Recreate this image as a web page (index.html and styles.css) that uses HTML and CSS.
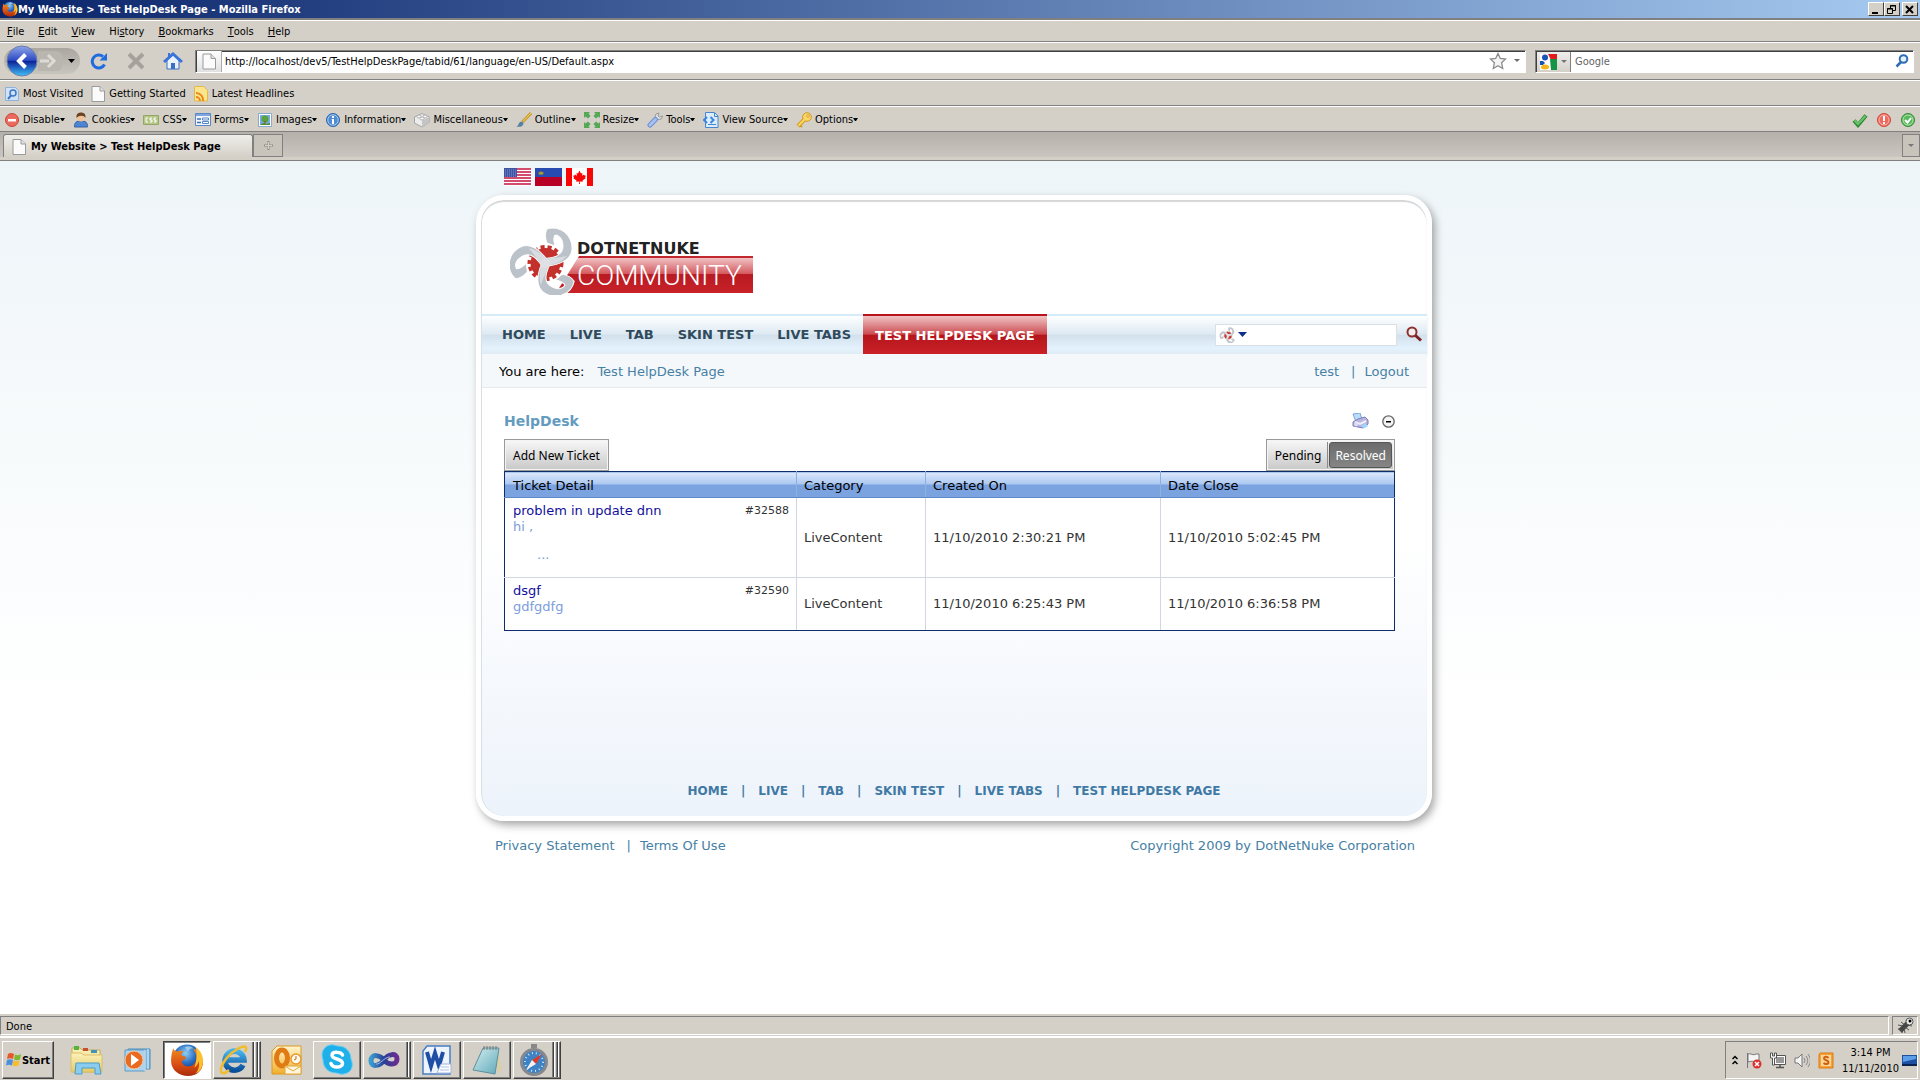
FILE: index.html
```html
<!DOCTYPE html>
<html lang="en">
<head>
    <meta charset="UTF-8">
    <meta name="viewport" content="width=device-width, initial-scale=1.0">
    <title>My Website &gt; Test HelpDesk Page</title>
    <link rel="stylesheet" href="styles.css">
</head>
<body>
    <!-- shared gradients and symbols -->
    <svg class="defs" width="0" height="0" aria-hidden="true">
        <defs>
            <linearGradient id="backBlue" x1="0" y1="0" x2="0" y2="1">
                <stop offset="0" stop-color="#8fa6e8"/><stop offset=".48" stop-color="#2c49c4"/>
                <stop offset=".5" stop-color="#0c1f96"/><stop offset="1" stop-color="#3fc0fa"/>
            </linearGradient>
            <linearGradient id="redBar" x1="0" y1="0" x2="0" y2="1">
                <stop offset="0" stop-color="#f3cfd1"/><stop offset=".49" stop-color="#d4585d"/>
                <stop offset=".5" stop-color="#b81b22"/><stop offset="1" stop-color="#c92128"/>
            </linearGradient>
            <linearGradient id="folder" x1="0" y1="0" x2="0" y2="1">
                <stop offset="0" stop-color="#fbf3bd"/><stop offset="1" stop-color="#e6c963"/>
            </linearGradient>
            <radialGradient id="globe" cx=".45" cy=".3" r=".7">
                <stop offset="0" stop-color="#8fd0f5"/><stop offset=".5" stop-color="#2a6cc0"/><stop offset="1" stop-color="#0a2a70"/>
            </radialGradient>
            <linearGradient id="fox" x1="0" y1="0" x2="0" y2="1">
                <stop offset="0" stop-color="#f08a1d"/><stop offset=".6" stop-color="#d94d12"/><stop offset="1" stop-color="#a82c0a"/>
            </linearGradient>
            <linearGradient id="ieBlue" x1="0" y1="0" x2="0" y2="1">
                <stop offset="0" stop-color="#46b4ec"/><stop offset="1" stop-color="#0a4f9a"/>
            </linearGradient>
            <linearGradient id="gold" x1="0" y1="0" x2="0" y2="1">
                <stop offset="0" stop-color="#fff6cf"/><stop offset="1" stop-color="#f2ad2b"/>
            </linearGradient>
            <linearGradient id="infinity" x1="0" y1="0" x2="1" y2="0">
                <stop offset="0" stop-color="#3a9bd0"/><stop offset=".5" stop-color="#2a3f95"/><stop offset="1" stop-color="#6a2c91"/>
            </linearGradient>
            <linearGradient id="pad" x1="0" y1="0" x2="1" y2="1">
                <stop offset="0" stop-color="#d5eef2"/><stop offset="1" stop-color="#5fa9b8"/>
            </linearGradient>
            <symbol id="i-page" viewBox="0 0 14 16">
                <path d="M1 .5h8l4.500 4.500v10.500H1z" fill="#fbfbfb" stroke="#9a9a9a"/><path d="M9 .5V5h4.500" fill="#e2e2e2" stroke="#9a9a9a"/>
            </symbol>
            <symbol id="i-firefox" viewBox="0 0 32 32">
                <circle cx="16" cy="15" r="13.500" fill="url(#globe)"/>
                <path d="M14 4c3-1.500 6-1 8 1-3 0-4 1-5 3z" fill="#b5e0f6" opacity=".7"/>
                <path d="M3 5c1 2 2 3 4 3 2-1 4-1 6 0-2 1-3 3-2 4l4 1c0 2-2 3-4 4 0 3 3 5 6 5 4 0 8-3 8-8 0-4-2-7-4-9 6 2 10 7 10 13 0 8-6 13-14 13S1 26 1 17c0-5 1-9 2-12z" fill="url(#fox)"/>
                <path d="M24 4c5 3 7 8 7 13 0 6-3 10-7 12 3-4 4-7 3-12-1 3-2 5-4 6 2-6 3-13 1-19z" fill="#fbc02d"/>
            </symbol>
            <symbol id="i-arm" viewBox="0 0 62 68" overflow="visible">
                <path d="M37 2C50-2 62 8 62 21c0 10-9 16-24 18l-5-4c0-3 3-4 6-4 9-1 14-5 14-12 0-6-3-11-8-11-2 3-1 7 0 11l-8-3c-2-5-2-10 0-14z" fill="#bcc2c9" stroke="#fff"/>
                <path d="M57 29c-5 5-11 8-19 10l-5-4c0-3 3-4 6-4 7 0 13-1 18-2z" fill="#d9dce0"/>
            </symbol>
            <symbol id="i-mark" viewBox="0 0 62 68" overflow="visible">
                <circle cx="35.500" cy="36" r="15" fill="#c4302b"/>
                <circle cx="35.500" cy="36" r="16" fill="none" stroke="#c4302b" stroke-width="4" stroke-dasharray="4 3"/>
                <use href="#i-arm" width="62" height="68"/>
                <use href="#i-arm" width="62" height="68" transform="rotate(120 35.500 36)"/>
                <use href="#i-arm" width="62" height="68" transform="rotate(240 35.500 36)"/>
                <circle cx="35.500" cy="36" r="5" fill="#dfe1e4"/>
            </symbol>
        </defs>
    </svg>

    <div class="window">
        <header class="chrome">
            <div class="titlebar">
                <svg width="16" height="16"><use href="#i-firefox"/></svg>
                <span class="titlebar-text">My Website &gt; Test HelpDesk Page - Mozilla Firefox</span>
                <div class="window-btns">
                    <button aria-label="Minimize"><svg width="10" height="9"><path d="M1 7h6v2H1z"/></svg></button>
                    <button aria-label="Restore"><svg width="10" height="9" fill="none" stroke="#000"><path d="M3.500 3V.5h5v5H6M3 1h6M.5 3.500h5v5h-5zM0 4h6"/></svg></button>
                    <button class="close" aria-label="Close"><svg width="10" height="9"><path d="M1 1l7 7M8 1L1 8" stroke="#000" stroke-width="2"/></svg></button>
                </div>
            </div>

            <nav class="menubar">
                <button><u>F</u>ile</button>
                <button><u>E</u>dit</button>
                <button><u>V</u>iew</button>
                <button>Hi<u>s</u>tory</button>
                <button><u>B</u>ookmarks</button>
                <button><u>T</u>ools</button>
                <button><u>H</u>elp</button>
            </nav>

            <div class="navbar">
                <div class="history-btns">
                    <button class="back" aria-label="Back"><svg width="32" height="32" viewBox="0 0 32 32"><circle cx="16" cy="16" r="15" fill="url(#backBlue)" stroke="#6d7da8"/><path d="M19.500 9.500L13 16l6.500 6.500" fill="none" stroke="#fff" stroke-width="4"/></svg></button>
                    <button aria-label="Forward"><svg width="26" height="22" viewBox="0 0 26 22"><path d="M0 1h18q7 0 7 10t-7 10H0z" fill="#b9b6b0"/><path d="M2 11h9M10 5l6 6-6 6" fill="none" stroke="#dedbd6" stroke-width="3"/></svg></button>
                    <button aria-label="Recent pages"><svg width="14" height="5"><path d="M4 0h7L7.500 4z"/></svg></button>
                </div>
                <button class="tool" aria-label="Reload"><svg width="18" height="18" viewBox="0 0 18 18"><path d="M14.500 12.500A6.500 6.500 0 1 1 13 4.500" fill="none" stroke="#1f6be0" stroke-width="3"/><path d="M17 1v7.500H9.500z" fill="#1f6be0"/></svg></button>
                <button class="tool" aria-label="Stop"><svg width="18" height="18" viewBox="0 0 18 18"><path d="M2 2l14 14M16 2L2 16" stroke="#a5a29c" stroke-width="4"/></svg></button>
                <button class="tool" aria-label="Home"><svg width="20" height="18" viewBox="0 0 20 18"><path d="M4 8v9h12V8l-6-5z" fill="#e9f2fd" stroke="#3a70c4"/><path d="M1 10l9-8 9 8" fill="none" stroke="#3a74d8" stroke-width="3"/><path d="M5 1h2v4H5z" fill="#3a74d8"/><path d="M8 11h4v6H8z" fill="#3a70c4"/></svg></button>
                <div class="field url-field">
                    <span class="field-icon"><svg width="14" height="17"><use href="#i-page"/></svg></span>
                    <input type="text" aria-label="Address" value="http://localhost/dev5/TestHelpDeskPage/tabid/61/language/en-US/Default.aspx">
                    <button aria-label="Bookmark this page"><svg width="18" height="18" viewBox="0 0 18 18"><path d="M9 1.500l2.300 5 5.200.6-3.900 3.700 1.100 5.700L9 13.700l-4.700 2.800 1.100-5.700L1.500 7.100l5.200-.6z" fill="#f4f4f4" stroke="#8b8b8b" stroke-width="1.300"/></svg></button>
                    <button aria-label="Show history"><svg width="8" height="4"><path d="M1 0h6L4 3z" fill="#6b6b6b"/></svg></button>
                </div>
                <div class="field search-field">
                    <button class="engine" aria-label="Search engine">
                        <svg width="17" height="16" viewBox="0 0 17 16"><path fill="#fff" d="M0 0h17v16H0z"/><path d="M8 0h9v6h-6z" fill="#e21c1c"/><path d="M10 5h7v11h-6z" fill="#159447"/><circle cx="5" cy="3.500" r="3" fill="#1a53b8"/><path d="M0 7h3l2 2-2 2H0z" fill="#1a53b8"/><ellipse cx="5" cy="13" rx="4" ry="2.500" fill="#f3b71b"/></svg>
                        <svg width="6" height="4"><path d="M0 0h6L3 3z" fill="#777"/></svg>
                    </button>
                    <input type="text" aria-label="Search" placeholder="Google">
                    <button aria-label="Search"><svg width="14" height="14" viewBox="0 0 14 14"><circle cx="8.500" cy="5" r="3.800" fill="#e8f1fa" stroke="#2e6db4" stroke-width="2"/><path d="M6 8l-4.500 4.500" stroke="#2e6db4" stroke-width="2.500"/></svg></button>
                </div>
            </div>

            <div class="bookmarks">
                <a href="#"><svg width="14" height="16" viewBox="0 0 14 16"><path d="M.5 1.500h10l3 3v10H.5z" fill="#cfe2f7" stroke="#8fb2dc"/><circle cx="8" cy="7" r="3" fill="none" stroke="#3d78c4" stroke-width="1.500"/><path d="M6 9.500L3 13" stroke="#3d78c4" stroke-width="2"/></svg>Most Visited</a>
                <a href="#"><svg width="14" height="16"><use href="#i-page"/></svg>Getting Started</a>
                <a href="#"><svg width="14" height="16" viewBox="0 0 14 16"><path d="M.5 .5h9l4 4v10.500H.5z" fill="#fbe58d" stroke="#e3b94a"/><path d="M2 7a7 7 0 0 1 7 8M2 11a4 4 0 0 1 4 4" fill="none" stroke="#e88a1c" stroke-width="2"/></svg>Latest Headlines</a>
            </div>

            <div class="devbar">
                <button><svg width="16" height="16" viewBox="0 0 16 16"><circle cx="8" cy="8" r="6.500" fill="#ea6a5e" stroke="#c9473c"/><path d="M4 7h8v2.500H4z" fill="#fff"/></svg>Disable<i></i></button>
                <button><svg width="16" height="16" viewBox="0 0 16 16"><path d="M1.500 15c0-5 2-6 6.500-6s6.500 1 6.500 6z" fill="#4e84d4" stroke="#3562a5"/><circle cx="8" cy="5.500" r="4" fill="#f1c39a"/><path d="M3.500 6C3 1 6 .5 8 .5S13 1 12.500 6C11 3 6 3 3.500 6z" fill="#6a4423"/></svg>Cookies<i></i></button>
                <button><svg width="16" height="16" viewBox="0 0 16 16"><path d="M.5 3.500h15v9H.5z" fill="#b6c687" stroke="#93a765"/><path d="M5 6H3v4h2M9 6H7v2h2v2H7M13 6h-2v2h2v2h-2" fill="none" stroke="#fff"/></svg>CSS<i></i></button>
                <button><svg width="16" height="16" viewBox="0 0 16 16"><path d="M.5 1.500h15v12H.5z" fill="#f2f7fd" stroke="#5a87c5"/><path d="M1 2h14v2H1z" fill="#7ea6dc"/><path d="M2 7h4M2 10.500h4" stroke="#3e6fb5" stroke-width="1.500"/><path d="M7.500 6h6v2h-6zM7.500 9.500h6v2h-6z" fill="#fff" stroke="#5a87c5"/></svg>Forms<i></i></button>
                <button><svg width="16" height="16" viewBox="0 0 16 16"><path d="M1.500 1.500h13v13h-13z" fill="#fff" stroke="#8aa9cf"/><path d="M3 3h10v10H3z" fill="#79a9e0"/><path d="M3 13l3-2 3 1 4-1v2z" fill="#4a8f32"/><circle cx="8" cy="7" r="3.500" fill="#59a33c"/><path d="M7.500 9h1v3h-1z" fill="#80571f"/></svg>Images<i></i></button>
                <button><svg width="16" height="16" viewBox="0 0 16 16"><circle cx="8" cy="8" r="6.500" fill="#4f8cd2" stroke="#2c65ad"/><circle cx="8" cy="8" r="5.200" fill="none" stroke="#a8caee"/><path d="M7 4h2v2H7zM6.500 7H9v5H7V8z" fill="#fff"/></svg>Information<i></i></button>
                <button><svg width="16" height="16" viewBox="0 0 16 16"><path d="M.5 5L8 1.500 15.500 5v5L8 15 .5 11z" fill="#ececec" stroke="#a5a5a5"/><path d="M8 8.500l7.500-3.500v5L8 15z" fill="#c4c4c4"/><g fill="#fafafa" stroke="#b0b0b0"><ellipse cx="5" cy="4.500" rx="2" ry="1.500"/><ellipse cx="11" cy="4.500" rx="2" ry="1.500"/><ellipse cx="8" cy="6.500" rx="2" ry="1.500"/></g></svg>Miscellaneous<i></i></button>
                <button><svg width="16" height="16" viewBox="0 0 16 16"><path d="M15 1L6.500 10" stroke="#c99b2c" stroke-width="3"/><path d="M15 1L7 9.500" stroke="#f2d36b"/><path d="M0 14.500c3 0 2-5 6-5l1.500 1.500c0 3.500-4 4.500-7.500 3.500z" fill="#5780a5"/></svg>Outline<i></i></button>
                <button><svg width="16" height="16" viewBox="0 0 16 16" fill="#55a854"><path d="M0 0h6L4.500 1.500 6.500 4 4 6.500 1.500 4.500 0 6zM16 0v6l-1.500-1.500L12 6.500 9.500 4l2-2.500L10 0zM0 16v-6l1.500 1.500L4 9.500 6.500 12l-2 2.500L6 16zM16 16h-6l1.500-1.500-2-2.500L12 9.500l2.500 2L16 10z"/></svg>Resize<i></i></button>
                <button><svg width="16" height="16" viewBox="0 0 16 16"><path d="M12 1L9 2 8 5l1 2 2 .5L14.500 7 15.500 4l-3 1-1.500-1z" fill="#e3e3e3" stroke="#999"/><path d="M8.500 7.500L3 13" stroke="#6b8fd6" stroke-width="5" stroke-linecap="round"/><path d="M8.500 7.500L3 13" stroke="#a9c1f0" stroke-width="3" stroke-linecap="round"/></svg>Tools<i></i></button>
                <button><svg width="16" height="16" viewBox="0 0 16 16"><path d="M2.500 .5h9l3.500 3.500v11.500H2.500z" fill="#dcecfb" stroke="#4686cf"/><path d="M5 12.500h8M11.500 1v3.500H15" stroke="#4686cf" fill="none"/><path d="M4 5L1 8l3 3M7.500 5l3 3-3 3" fill="none" stroke="#3b86e0" stroke-width="2"/></svg>View Source<i></i></button>
                <button><svg width="16" height="16" viewBox="0 0 16 16"><path d="M9 7L2 14" stroke="#d39a22" stroke-width="4"/><path d="M4 13l2 2" stroke="#d39a22" stroke-width="2"/><circle cx="11" cy="5" r="4.300" fill="#fbd765" stroke="#d39a22"/><path d="M8.500 7.500L2.500 13.500" stroke="#fbd765" stroke-width="2"/><circle cx="12" cy="4" r="1.300" fill="#fff" stroke="#d39a22"/></svg>Options<i></i></button>
                <div class="checks">
                    <svg width="16" height="16" viewBox="0 0 16 16"><path d="M2 8.500l4 4.500L14 3.500" fill="none" stroke="#2f8a33" stroke-width="4"/><path d="M2.500 8.500L6 12l7.500-8" fill="none" stroke="#6cc36c" stroke-width="2"/></svg>
                    <svg width="16" height="16" viewBox="0 0 16 16"><circle cx="8" cy="8" r="6.500" fill="#ef6a5c" stroke="#cf4638"/><circle cx="8" cy="8" r="5" fill="none" stroke="#f9bab2"/><path d="M7 4h2v5H7zM7 10h2v2H7z" fill="#fff"/></svg>
                    <svg width="16" height="16" viewBox="0 0 16 16"><circle cx="8" cy="8" r="6.500" fill="#5cb85c" stroke="#2f8a33"/><circle cx="8" cy="8" r="5" fill="none" stroke="#b9e3b4"/><path d="M5 8l2.500 2.500L11 6" fill="none" stroke="#fff" stroke-width="2"/></svg>
                </div>
            </div>

            <div class="tabs">
                <button class="tab active"><svg width="14" height="16"><use href="#i-page"/></svg>My Website &gt; Test HelpDesk Page</button>
                <button class="tab new-tab" aria-label="New tab"><svg width="9" height="9"><path d="M3.500 0h2v3.500H9v2H5.500V9h-2V5.500H0v-2h3.500z" fill="#8d8a85"/><path d="M4.500 1v7M1 4.500h7" stroke="#d4d0c8"/></svg></button>
                <button class="tab all-tabs" aria-label="List all tabs"><svg width="6" height="4"><path d="M0 0h6L3 3z" fill="#777"/></svg></button>
            </div>
        </header>

        <main class="page">
            <div class="site">
                <div class="flags">
                    <a href="#" aria-label="English (United States)"><svg width="27" height="18"><path fill="#fff" d="M0 0h27v18H0z"/><path d="M0 1h27M0 4h27M0 7h27M0 10h27M0 13h27M0 16h27" stroke="#c4123f" stroke-width="1.500"/><path fill="#3c55a5" d="M0 0h13v9H0z"/><path d="M1 2h12M1 4h12M1 6h12M1 8h12" stroke="#8191c9" stroke-dasharray="1 1"/></svg></a>
                    <a href="#" aria-label="Deutsch (Liechtenstein)"><svg width="27" height="18"><path fill="#274bb0" d="M0 0h27v9H0z"/><path fill="#b80027" d="M0 9h27v9H0z"/><path d="M4 6.500h4l.5-2.500-1.500.5-1-1.500-1 1.500L3.500 4z" fill="#b5a23a" stroke="#7f773c" stroke-width=".5"/></svg></a>
                    <a href="#" aria-label="English (Canada)"><svg width="27" height="18"><path fill="#fff" d="M0 0h27v18H0z"/><path fill="#fa0505" d="M0 0h6v18H0zM21 0h6v18h-6zM13.500 2.500l1.500 3 1.500-.7-.5 3 2-1.300.5 1 1.500.2-1 1.800.7.700-3.200 2.300.3 1.200-3-.3.200 2.600h-1l.2-2.600-3 .3.300-1.200-3.200-2.300.7-.7-1-1.800 1.500-.2.500-1 2 1.300-.5-3 1.500.7z"/></svg></a>
                </div>

                <div class="card">
                    <a class="logo" href="#" aria-label="DotNetNuke Community">
                        <svg width="244" height="68" viewBox="0 0 244 68">
                            <path d="M69 29h174v37H46z" fill="url(#redBar)"/>
                            <path d="M69 29h174v2H68z" fill="#c3272d"/>
                            <use href="#i-mark" width="62" height="68"/>
                            <text class="logo-name" x="67" y="27">DOTNETNUKE</text>
                            <text class="logo-sub" x="67" y="58">COMMUNITY</text>
                        </svg>
                    </a>

                    <nav class="mainnav">
                        <a href="#">HOME</a>
                        <a href="#">LIVE</a>
                        <a href="#">TAB</a>
                        <a href="#">SKIN TEST</a>
                        <a href="#">LIVE TABS</a>
                        <a href="#" class="active">TEST HELPDESK PAGE</a>
                        <form class="site-search">
                            <div class="site-search-box">
                                <svg width="16" height="16" viewBox="0 0 62 68"><use href="#i-mark" width="62" height="68"/></svg>
                                <svg width="9" height="6"><path d="M0 0h9L4.500 5z" fill="#0b2f8a"/></svg>
                                <input type="text" aria-label="Search site">
                            </div>
                            <button type="button" aria-label="Go"><svg width="18" height="18" viewBox="0 0 18 18"><circle cx="7" cy="6" r="4.500" fill="#f3eeee" stroke="#8e3030" stroke-width="2"/><path d="M10.500 9.500l5.500 5" stroke="#7c1f1f" stroke-width="3"/></svg></button>
                        </form>
                    </nav>

                    <div class="crumbs">
                        <span>You are here:</span>
                        <a href="#">Test HelpDesk Page</a>
                        <div class="user">
                            <a href="#">test</a><span class="bar">|</span><a href="#">Logout</a>
                        </div>
                    </div>

                    <section class="module">
                        <div class="module-head">
                            <h1>HelpDesk</h1>
                            <button aria-label="Print"><svg width="17" height="16" viewBox="0 0 17 16"><path d="M1 1l7-1 2 6-6 3z" fill="#b9dcf8" stroke="#7aa6dc"/><path d="M1 9l5-3 7-2 3 3v4l-5 4-10-2z" fill="#b7b4de" stroke="#7c7bb8"/><path d="M3 9l5 2 6-3" stroke="#f0eefb" stroke-width="2" fill="none"/><path d="M9 13l4-3 3 3-4 2.500z" fill="#9ed4fa"/><circle cx="4" cy="11.500" r="2" fill="#dcdaf2"/></svg></button>
                            <button aria-label="Minimize module"><svg width="13" height="13"><circle cx="6.500" cy="6.500" r="5.700" fill="#f4f4f4" stroke="#666" stroke-width="1.300"/><path d="M4 6h5v1.500H4z"/></svg></button>
                        </div>
                        <div class="actions">
                            <button class="btn">Add New Ticket</button>
                            <div class="toggle">
                                <button>Pending</button>
                                <button class="on">Resolved</button>
                            </div>
                        </div>
                        <table class="tickets">
                            <thead>
                                <tr>
                                    <th class="col-detail">Ticket Detail</th>
                                    <th class="col-category">Category</th>
                                    <th class="col-date">Created On</th>
                                    <th>Date Close</th>
                                </tr>
                            </thead>
                            <tbody>
                                <tr class="tall">
                                    <td class="detail">
                                        <div class="ticket-top"><a href="#">problem in update dnn</a><span>#32588</span></div>
                                        <p>hi ,</p>
                                        <p class="more">...</p>
                                    </td>
                                    <td>LiveContent</td>
                                    <td>11/10/2010 2:30:21 PM</td>
                                    <td>11/10/2010 5:02:45 PM</td>
                                </tr>
                                <tr>
                                    <td class="detail">
                                        <div class="ticket-top"><a href="#">dsgf</a><span>#32590</span></div>
                                        <p>gdfgdfg</p>
                                    </td>
                                    <td>LiveContent</td>
                                    <td>11/10/2010 6:25:43 PM</td>
                                    <td>11/10/2010 6:36:58 PM</td>
                                </tr>
                            </tbody>
                        </table>
                    </section>

                    <nav class="footnav">
                        <a href="#">HOME</a><span>|</span><a href="#">LIVE</a><span>|</span><a href="#">TAB</a><span>|</span><a href="#">SKIN TEST</a><span>|</span><a href="#">LIVE TABS</a><span>|</span><a href="#">TEST HELPDESK PAGE</a>
                    </nav>
                </div>

                <footer class="legal">
                    <a href="#">Privacy Statement</a><span class="bar">|</span><a href="#">Terms Of Use</a>
                    <span class="copyright">Copyright 2009 by DotNetNuke Corporation</span>
                </footer>
            </div>
        </main>

        <div class="statusbar">
            <div class="status-text">Done</div>
            <div class="status-icon"><svg width="17" height="17" viewBox="0 0 17 17"><path d="M3 14l8-8" stroke="#444" stroke-width="5"/><path d="M1 8l5 1M4 5l4 3M8 16l-1-5M12 13l-4-3M1 12l3 0M5 16v-3M9 3l2 3M15 9l-4-1" stroke="#555"/><circle cx="12.500" cy="4.500" r="3.500" fill="#eee" stroke="#555"/><circle cx="13" cy="4" r="1.500"/></svg></div>
        </div>
    </div>

    <footer class="taskbar">
        <button class="start"><svg width="16" height="16" viewBox="0 0 16 16"><path d="M2 2c2-1.500 4-1 6 0L7 7C5 6 3 6 1 7z" fill="#e8572a"/><path d="M9 2.500c2 1 4 1 6-.5l-1 5.500c-2 1-4 1-6 0z" fill="#7cb82f"/><path d="M1 8c2-1 4-1 6 0l-1 5.500c-2-1-4-1-6 0z" fill="#4a8fe0"/><path d="M7.500 8.500c2 1 4 1 6 0l-1 5c-2 1-4 1-6 0z" fill="#f7bd27"/></svg>Start</button>
        <button class="task plain" aria-label="Windows Explorer"><svg width="34" height="32" viewBox="0 0 34 32"><path d="M2 4h8l2 2h18v22H2z" fill="url(#folder)" stroke="#c9ab50"/><path d="M4 2h5v4H4z" fill="#58b33c"/><path d="M13 4h5v3h-5z" fill="#c9502c"/><path d="M21 6h6v3h-6z" fill="#4193b8"/><path d="M1 9h10l3 2h18v17H1z" fill="url(#folder)" stroke="#dbc06a"/><path d="M5 30l1-11h23l2 11h-6v-6H12v6z" fill="#8accee" stroke="#4c9cc8"/></svg></button>
        <button class="task plain" aria-label="Media Player"><svg width="32" height="32" viewBox="0 0 32 32"><path d="M7 5h22v20H7z" fill="#7fb7dc" stroke="#4b8dba"/><path d="M4 6h20v21H4z" fill="#a9d3ee" stroke="#5d9cc6"/><path d="M24 6v21M27 5v20" stroke="#e4f3fc"/><circle cx="13" cy="16" r="9" fill="#ea6a1f" stroke="#f7c7a4"/><path d="M10 10v12l8-6z" fill="#fff"/></svg></button>
        <button class="task pressed" aria-label="Firefox"><svg width="34" height="34"><use href="#i-firefox"/></svg></button>
        <button class="task stack-3" aria-label="Internet Explorer"><svg width="32" height="32" viewBox="0 0 32 32"><path d="M25 21a9.500 9.500 0 1 1 1-5H9" fill="none" stroke="url(#ieBlue)" stroke-width="5.500"/><path d="M27 8c4-8-3-6-9-2C8 12 0 25 4 29c2 1 5-1 7-3" fill="none" stroke="#f2bd2c" stroke-width="2.500"/></svg></button>
        <button class="task plain" aria-label="Outlook"><svg width="32" height="32" viewBox="0 0 32 32"><path d="M6 2h24v28H1V7z" fill="url(#gold)" stroke="#dc9a22"/><ellipse cx="11" cy="14" rx="5.500" ry="8" fill="none" stroke="#e07a12" stroke-width="5"/><path d="M14 22h16v8H14z" fill="#fff7df" stroke="#e2a638"/><path d="M14 22l8 5 8-5" fill="none" stroke="#e2a638"/><circle cx="25" cy="15" r="5" fill="#fffaf0" stroke="#e59a2d" stroke-width="1.500"/><path d="M25 12v3l-2 1" stroke="#c46c10" fill="none"/></svg></button>
        <button class="task" aria-label="Skype"><svg width="32" height="32" viewBox="0 0 32 32"><path d="M9 1c4-1 6 1 8 1 8 0 13 6 13 13 3 6 1 14-7 15-4 1-5-1-8-1C7 29 2 23 2 16-1 9 3 2 9 1z" fill="#1fb0ea" stroke="#6fcff5"/><path d="M21.500 11c-1-3-10-4-10.500 0-.5 5 10.500 3 10.500 8.500 0 4.500-10 5-11.500 0" fill="none" stroke="#fff" stroke-width="3.500" stroke-linecap="round"/></svg></button>
        <button class="task stack-2" aria-label="Visual Studio"><svg width="32" height="32" viewBox="0 0 32 32"><path d="M16 16c-4-5-13-7-13 1 0 7 9 5 13-1s13-8 13-1-9 6-13 1z" fill="none" stroke="url(#infinity)" stroke-width="5"/><path d="M8 20c4 1 8-7 14-7" fill="none" stroke="#9db7e6"/></svg></button>
        <button class="task" aria-label="Word"><svg width="32" height="32" viewBox="0 0 32 32"><path d="M6 2h23v28H2V7z" fill="#eef4fc" stroke="#4a7cc4" stroke-width="1.500"/><path d="M6 8l4 14 4-13 4 13 4-14" fill="none" stroke="#1f4fa5" stroke-width="4"/><path d="M20 20h10v9H16z" fill="#fff" stroke="#9fb6d8"/><path d="M20 23h8M19 26h9" stroke="#a9c1e4"/></svg></button>
        <button class="task" aria-label="Notepad"><svg width="32" height="32" viewBox="0 0 32 32"><path d="M27 5l4 20-5 5z" fill="#d9cfa8"/><path d="M12 4h16l-4 26-22-4z" fill="url(#pad)" stroke="#5d8f9b"/><path d="M13 2v4M16 2v4M19 2v4M22 2v4M25 2v4" stroke="#777"/></svg></button>
        <button class="task stack-3" aria-label="Safari"><svg width="32" height="34" viewBox="0 0 32 34"><path d="M13 1h6v4h-6z" fill="#888"/><circle cx="16" cy="19" r="12.500" fill="#3f82c4" stroke="#85888c" stroke-width="3"/><circle cx="16" cy="19" r="9" fill="none" stroke="#cfe4f5" stroke-width="2" stroke-dasharray="1 3"/><path d="M24 11l-6 10-4-4z" fill="#e03a26"/><path d="M8 27l6-10 4 4z" fill="#f2f2f2"/></svg></button>
        <div class="tray">
            <svg width="6" height="10" fill="none" stroke="#000" stroke-width="1.500"><path d="M.5 4L3 1.500 5.500 4M.5 9L3 6.500 5.500 9"/></svg>
            <svg width="16" height="17" viewBox="0 0 16 17"><path d="M1.500 1v15M2 2c3-1 5 2 8 0h3v8c-4 1-6-2-11 0z" fill="#f5f5f5" stroke="#777"/><circle cx="11" cy="12" r="4.500" fill="#dc2f2f"/><path d="M9 10l4 4M13 10l-4 4" stroke="#fff" stroke-width="1.500"/></svg>
            <svg width="16" height="17" viewBox="0 0 16 17"><path d="M4.500 3.500h11v9h-11z" fill="#fff" stroke="#555"/><path d="M6 5h8v6H6z" fill="#999"/><path d="M6 15.500h8M10 13v2" stroke="#555" stroke-width="1.500"/><path d="M.5 1v5h2v7h2V6h2V1h-2v3h-2V1z" fill="#fff" stroke="#555"/></svg>
            <svg width="16" height="17" viewBox="0 0 16 17"><path d="M1 6h3l4-4v13l-4-4H1z" fill="#f5f5f5" stroke="#777"/><path d="M10 6q2 2.500 0 5M12 4q3.500 4.500 0 9M14 2q5 6.500 0 13" fill="none" stroke="#888"/></svg>
            <svg width="16" height="17" viewBox="0 0 16 17"><path d="M2 1h13v15H1V3z" fill="#f6a234" stroke="#d97b12"/><path d="M3 3h10v11H3z" fill="#fbd69b"/><path d="M10.500 6C9 4 6 4.500 6 6.500c0 2 4.500 1.500 4.500 3.700C10.500 12.500 7 12.500 5.500 11" fill="none" stroke="#cf5f0b" stroke-width="2"/></svg>
            <div class="clock"><span>3:14 PM</span><span>11/11/2010</span></div>
            <svg width="15" height="13"><path fill="#1d4fa3" d="M0 1h15v10H0z"/><path fill="#5d9ee6" d="M1 2h13v3L1 8z"/><path fill="#0c2450" d="M0 10h15v2H0z"/></svg>
        </div>
    </footer>
</body>
</html>
```

FILE: styles.css
```css
* {
    box-sizing: border-box;
}

html, body {
    height: 100%;
    margin: 0;
}

body {
    display: flex;
    flex-direction: column;
    overflow: hidden;
    background-color: #d4d0c8;
    font-family: "DejaVu Sans Condensed", "DejaVu Sans", Tahoma, sans-serif;
    font-size: 11px;
    color: #000;
}

button {
    display: flex;
    align-items: center;
    padding: 0;
    border: none;
    background: none;
    font: inherit;
    color: inherit;
    white-space: nowrap;
}

input {
    border: none;
    outline: none;
    background: none;
    font: inherit;
    min-width: 0;
    padding: 0;
}

a {
    color: inherit;
    text-decoration: none;
}

svg {
    flex: none;
    display: block;
}

.defs {
    position: absolute;
}

.window {
    flex: 1;
    display: flex;
    flex-direction: column;
    min-height: 0;
}

/* browser chrome */
.titlebar {
    display: flex;
    align-items: center;
    height: 18px;
    padding: 0 2px;
    background: linear-gradient(to right, #0a246a, #a6caf0);
    color: #fff;
    font-weight: bold;
}

.titlebar-text {
    flex: 1;
}

.window-btns {
    display: flex;
}

.window-btns button {
    width: 16px;
    height: 14px;
    justify-content: center;
    background-color: #d4d0c8;
    border: 1px solid;
    border-color: #fff #404040 #404040 #fff;
}

.window-btns .close {
    margin-left: 2px;
}

.menubar, .navbar, .bookmarks, .devbar {
    display: flex;
    align-items: center;
    border-top: 1px solid #fff;
    border-bottom: 1px solid #808080;
}

.menubar {
    height: 24px;
    padding: 2px 7px 0;
    gap: 14px;
    border-top: 2px solid #808080;
    box-shadow: inset 0 1px #fff;
}

.navbar {
    height: 38px;
    padding: 0 6px 0 4px;
}

.history-btns {
    display: flex;
    align-items: center;
    height: 26px;
    width: 76px;
    border-radius: 13px;
    background: linear-gradient(#aaa7a0, #c8c5bf);
}

.history-btns .back {
    margin-left: 2px;
}

.tool {
    width: 36px;
    height: 30px;
    margin-left: 1px;
    justify-content: center;
}

.field {
    display: flex;
    align-items: center;
    height: 23px;
    background-color: #fff;
    border: 1px solid;
    border-color: #808080 #fff #fff #808080;
    box-shadow: inset 1px 1px #404040;
}

.field input {
    flex: 1;
    height: 20px;
}

.url-field {
    flex: 1;
    margin-left: 4px;
    padding-right: 4px;
    gap: 6px;
}

.field-icon {
    display: flex;
    justify-content: center;
    width: 25px;
    padding: 2px 0;
    margin: 1px -3px 0 1px;
    border-right: 1px solid #aaa;
    background: linear-gradient(#fff, #e0e0e0);
}

.search-field {
    width: 379px;
    margin-left: 9px;
    padding-right: 4px;
    gap: 4px;
}

.engine {
    gap: 4px;
    height: 20px;
    width: 34px;
    margin: 1px 0 0 1px;
    padding-left: 3px;
    border-right: 1px solid #808080;
    background: linear-gradient(#eee, #d4d0c8);
}

.search-field input::placeholder {
    color: #666;
    opacity: 1;
}

.bookmarks {
    height: 26px;
    padding: 1px 5px 0;
    gap: 8px;
}

.bookmarks a {
    display: flex;
    align-items: center;
    gap: 4px;
}

.devbar {
    height: 26px;
    padding: 1px 4px 0;
    gap: 8px;
}

.devbar > button {
    gap: 3px;
}

.devbar i {
    width: 5px;
    margin-left: -3px;
    border: 2px solid transparent;
    border-top: 3px solid #000;
    border-bottom: 0;
}

.checks {
    display: flex;
    gap: 8px;
    margin-left: auto;
}

.tabs {
    display: flex;
    align-items: flex-end;
    height: 29px;
    padding-left: 3px;
    border-bottom: 1px solid #808080;
    box-shadow: inset 0 -3px #d4d0c8;
    background: linear-gradient(#b5b1aa, #cdc8c1);
}

.tab {
    height: 23px;
    margin-bottom: 3px;
    justify-content: center;
    border: 1px solid #808080;
    background-color: #c8c4bc;
}

.tab.active {
    width: 250px;
    padding: 1px 0 0 8px;
    gap: 5px;
    justify-content: flex-start;
    border-radius: 3px 3px 0 0;
    border-bottom: none;
    background: linear-gradient(#f0eeea, #d4d0c8);
    font-weight: bold;
}

.new-tab {
    width: 30px;
}

.all-tabs {
    width: 18px;
    margin-left: auto;
}

/* web page */
.page {
    flex: 1;
    min-height: 0;
    overflow: hidden;
    padding-right: 12px;
    background: linear-gradient(#eef5f8, #fff 540px);
    font-family: Verdana, "DejaVu Sans", sans-serif;
    font-size: 13px;
}

.site {
    max-width: 956px;
    margin: 0 auto;
    padding-top: 7px;
}

.flags {
    display: flex;
    gap: 4px;
    padding: 0 28px 9px;
}

.card {
    display: flex;
    flex-direction: column;
    min-height: 626px;
    border: 5px solid #fff;
    border-radius: 28px;
    background: linear-gradient(#fff 55%, #edf3fb);
    box-shadow: 3px 4px 8px rgba(0, 0, 0, 0.35), inset 0 2px 1px #d4d6d8, inset 1px 0 #d9e0e6;
}

.logo {
    padding: 27px 29px 19px;
}

.logo-name {
    font-family: "DejaVu Sans", sans-serif;
    font-size: 16px;
    font-weight: bold;
    fill: #222;
}

.logo-sub {
    font-family: Roboto, sans-serif;
    font-size: 28px;
    font-weight: 300;
    fill: #fff;
}

.mainnav {
    display: flex;
    align-items: stretch;
    height: 40px;
    margin-left: 1px;
    padding-left: 8px;
    border-top: 2px solid #d6ebfa;
    background: linear-gradient(#fff, #dde9f2 48%, #d2e0eb 50%, #e4f2fd 85%, #dfecf5);
    box-shadow: 0 2px 2px #dfe4e8;
    color: #2f4a5c;
    font-weight: bold;
}

.mainnav > a {
    display: flex;
    align-items: center;
    padding: 0 12px 2px;
}

.mainnav > .active {
    margin-top: -2px;
    padding-bottom: 0;
    border-top: 2px solid #b9141b;
    background: linear-gradient(#f0c4c6, #cc4c51 48%, #b5151c 50%, #cb2128);
    color: #fff;
}

.site-search {
    display: flex;
    align-items: center;
    gap: 8px;
    margin: 0 4px 0 auto;
}

.site-search-box {
    display: flex;
    align-items: center;
    gap: 3px;
    width: 182px;
    height: 22px;
    padding-left: 3px;
    border: 1px solid #d9e0e6;
    background-color: #fff;
}

.site-search-box input {
    flex: 1;
}

.crumbs {
    display: flex;
    align-items: center;
    gap: 13px;
    height: 34px;
    margin-left: 1px;
    padding: 2px 18px 0 17px;
    border-bottom: 1px solid #e4eaef;
    background-color: #f4f8fb;
}

.crumbs a, .bar, .legal {
    color: #4680a5;
}

.user {
    margin-left: auto;
}

.bar {
    margin: 0 9px 0 12px;
}

.module {
    flex: 1;
    padding: 24px 32px 0 23px;
}

.module-head {
    display: flex;
    align-items: center;
    gap: 13px;
    height: 18px;
    margin-bottom: 9px;
}

.module-head h1 {
    flex: 1;
    margin: 0;
    font-size: 14px;
    color: #649bc0;
}

.actions {
    display: flex;
    justify-content: space-between;
    font-family: "Noto Sans", sans-serif;
    font-size: 12px;
}

.btn, .toggle {
    height: 32px;
    border: 1px solid #999;
    background: linear-gradient(#f8f8f8, #c8c8c8);
    box-shadow: inset 0 0 0 1px #f4f4f4;
}

.btn {
    padding: 0 8px;
}

.toggle {
    display: flex;
    align-items: center;
    padding: 2px;
}

.toggle button {
    height: 26px;
    padding: 0 6px;
    border-right: 1px solid #888;
}

.toggle .on {
    margin-left: 1px;
    padding: 0 5px;
    border: 1px solid #555;
    border-radius: 3px;
    background: linear-gradient(#6c6c6c, #858585);
    color: #fff;
}

.tickets {
    width: 100%;
    table-layout: fixed;
    border-collapse: collapse;
    border: 1px solid #0f2c6b;
    background-color: #fff;
}

.tickets th {
    height: 26px;
    padding: 2px 7px 0;
    border-right: 1px solid #8fafe0;
    border-bottom: 1px solid #5f89c6;
    background: linear-gradient(#dce9fb, #a9c6f0 48%, #7ba3e0 50%);
    font-weight: normal;
    text-align: left;
}

.tickets .col-detail {
    width: 292px;
}

.tickets .col-category {
    width: 129px;
}

.tickets .col-date {
    width: 235px;
}

.tickets td {
    height: 53px;
    padding: 5px 7px;
    border: 1px solid #d0d7e0;
    color: #333;
    line-height: 16px;
}

.tickets .tall td {
    height: 80px;
}

.tickets td, .tickets th {
    border-left: none;
}

.tickets tr > :last-child {
    border-right-color: #0f2c6b;
}

.tickets tr > :first-child {
    padding-left: 8px;
    border-left: 1px solid #0f2c6b;
}

.tickets tbody tr:last-child td {
    border-bottom-color: #0f2c6b;
}

.tickets .detail {
    vertical-align: top;
}

.ticket-top {
    display: flex;
    justify-content: space-between;
}

.ticket-top a {
    color: #10109a;
}

.ticket-top span {
    font-size: 11px;
}

.detail p {
    margin: 0;
    color: #7a9edb;
}

.detail .more {
    padding: 12px 0 0 24px;
}

.footnav {
    display: flex;
    justify-content: center;
    gap: 13px;
    padding-bottom: 18px;
    color: #3f79a4;
    font-size: 12px;
    font-weight: bold;
}

.legal {
    display: flex;
    padding: 17px 17px 0 19px;
}

.copyright {
    margin-left: auto;
}

/* status bar */
.statusbar {
    display: flex;
    gap: 3px;
    height: 23px;
    padding: 2px 2px 1px 0;
    border-bottom: 1px solid #fff;
}

.status-text, .status-icon {
    display: flex;
    align-items: center;
    border: 1px solid;
    border-color: #808080 #fff #fff #808080;
}

.status-text {
    flex: 1;
    padding: 1px 0 0 5px;
}

.status-icon {
    width: 26px;
    justify-content: center;
}

/* taskbar */
.taskbar {
    display: flex;
    align-items: flex-start;
    height: 43px;
    padding: 3px 2px;
    border-top: 1px solid #fff;
}

.start, .task {
    height: 38px;
    justify-content: center;
    border: 1px solid;
    border-color: #fff #404040 #404040 #fff;
    box-shadow: inset -1px -1px #808080;
}

.start {
    width: 52px;
    margin-right: 9px;
    font-weight: bold;
}

.task {
    width: 48px;
    margin-right: 2px;
}

.task.plain {
    border-color: transparent;
    box-shadow: none;
}

.task.pressed {
    background-color: #fff;
    border-color: #404040 #fff #fff #404040;
    box-shadow: inset 1px 1px #808080;
}

/* several windows grouped under one button */
.task.stack-2, .task.stack-3 {
    justify-content: flex-start;
    padding-left: 4px;
    background: repeating-linear-gradient(to right, #808080 0 1px, #404040 1px 2px, #fff 2px 3px, #d4d0c8 3px 4px) right / 8px 100% no-repeat;
}

.task.stack-2 {
    background-size: 4px 100%;
}

.tray {
    display: flex;
    align-items: center;
    gap: 8px;
    height: 38px;
    margin-left: auto;
    padding-left: 6px;
    border: 1px solid;
    border-color: #808080 #fff #fff #808080;
}

.clock {
    display: flex;
    flex-direction: column;
    align-items: center;
    gap: 3px;
    margin-right: -5px;
}
```
